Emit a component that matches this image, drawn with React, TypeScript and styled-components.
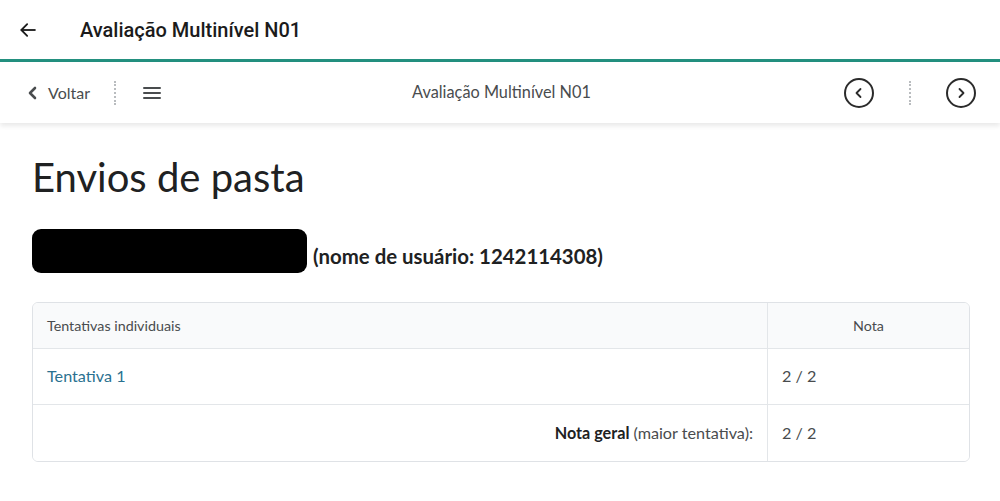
import React from 'react';
import styled, { createGlobalStyle } from 'styled-components';

const GlobalStyle = createGlobalStyle`
  html, body {
    margin: 0;
    padding: 0;
    background: #fff;
  }
  body {
    font-family: Lato, "Open Sans", sans-serif;
    color: #202122;
  }
`;

const AppBar = styled.header`
  display: flex;
  align-items: center;
  height: 59px;
  padding-left: 18px;
  border-bottom: 3px solid #23907f;
  background: #fff;
`;

const IconButton = styled.button`
  display: flex;
  align-items: center;
  justify-content: center;
  padding: 0;
  border: none;
  background: transparent;
  color: #1b1b1b;
  cursor: pointer;
`;

const AppTitle = styled.h1`
  margin: 0 0 0 42px;
  font-family: Roboto, sans-serif;
  font-size: 20px;
  font-weight: 500;
  color: #1b1b1b;
`;

const NavBar = styled.nav`
  position: relative;
  display: grid;
  grid-template-columns: 1fr auto 1fr;
  align-items: center;
  height: 61px;
  padding: 0 24px 0 27px;
  background: #fff;
  box-shadow: 0 3px 5px rgba(0, 0, 0, 0.09);
`;

const NavSide = styled.div<{ $end?: boolean }>`
  display: flex;
  align-items: center;
  justify-content: ${(p) => (p.$end ? 'flex-end' : 'flex-start')};
  gap: ${(p) => (p.$end ? '35px' : '0')};
`;

const BackLink = styled.a`
  display: flex;
  align-items: center;
  gap: 9px;
  color: #494c4e;
  font-size: 16px;
  text-decoration: none;
  margin-right: 24px;
`;

const DottedDivider = styled.span`
  display: block;
  width: 0;
  height: 24px;
  border-left: 2px dotted #b9bcbf;
`;

const Hamburger = styled(IconButton)`
  margin-left: 26px;
  color: #494c4e;
`;

const NavTitle = styled.div`
  font-size: 16.3px;
  color: #494c4e;
  margin-top: -2px;
`;

const CircleButton = styled(IconButton)`
  width: 30px;
  height: 30px;
  border: 2px solid #2b2b2b;
  border-radius: 50%;
  box-sizing: border-box;
`;

const Main = styled.main`
  padding: 30px 30px 0 32px;
`;

const Heading = styled.h2`
  margin: 0;
  font-size: 40px;
  font-weight: 400;
  line-height: 1.2;
  color: #202122;
`;

const UserLine = styled.div`
  display: flex;
  align-items: center;
  margin-top: 28px;
`;

const Redacted = styled.span`
  display: block;
  width: 275px;
  height: 44px;
  border-radius: 9px;
  background: #000;
`;

const UserName = styled.span`
  margin-left: 6px;
  margin-top: 10px;
  font-size: 20.4px;
  font-weight: 700;
  color: #202122;
`;

const Table = styled.div`
  display: grid;
  grid-template-columns: 735px 1fr;
  margin-top: 29px;
  border: 1px solid #dfe2e6;
  border-radius: 6px;
  overflow: hidden;
`;

const Cell = styled.div<{ $head?: boolean; $align?: 'left' | 'center' | 'right'; $last?: boolean; $right?: boolean }>`
  display: flex;
  align-items: center;
  justify-content: ${(p) => (p.$align === 'center' ? 'center' : p.$align === 'right' ? 'flex-end' : 'flex-start')};
  height: ${(p) => (p.$head ? '46px' : '56px')};
  padding: ${(p) => (p.$head ? '0 14px' : '0 14px 2px')};
  box-sizing: border-box;
  background: ${(p) => (p.$head ? '#f9fafb' : '#fff')};
  border-bottom: ${(p) => (p.$last ? 'none' : '1px solid #e3e6e9')};
  border-right: ${(p) => (p.$right ? 'none' : '1px solid #e3e6e9')};
  font-size: ${(p) => (p.$head ? '14.3px' : '16.2px')};
  color: #494c4e;
`;

const Link = styled.a`
  color: #2a7190;
  text-decoration: none;
`;

const Strong = styled.b`
  font-weight: 700;
  color: #202122;
  margin-right: 4px;
`;

const App = () => (
  <>
    <GlobalStyle />
    <AppBar>
      <IconButton aria-label="Voltar">
        <svg width="20" height="20" viewBox="0 0 24 24" fill="none" stroke="currentColor" strokeWidth="2.2" strokeLinecap="square">
          <path d="M20 12H5" />
          <path d="M11 5l-7 7 7 7" strokeLinecap="round" strokeLinejoin="miter" />
        </svg>
      </IconButton>
      <AppTitle>Avaliação Multinível N01</AppTitle>
    </AppBar>

    <NavBar>
      <NavSide>
        <BackLink href="#">
          <svg width="12" height="14" viewBox="0 0 12 14" fill="none" stroke="#494c4e" strokeWidth="2.6" strokeLinecap="round" strokeLinejoin="round">
            <path d="M8 2L3 7l5 5" />
          </svg>
          Voltar
        </BackLink>
        <DottedDivider />
        <Hamburger aria-label="Menu">
          <svg width="20" height="16" viewBox="0 0 20 16" fill="none" stroke="currentColor" strokeWidth="2" strokeLinecap="round">
            <path d="M2 3h16M2 8h16M2 13h16" />
          </svg>
        </Hamburger>
      </NavSide>
      <NavTitle>Avaliação Multinível N01</NavTitle>
      <NavSide $end>
        <CircleButton aria-label="Anterior">
          <svg width="14" height="14" viewBox="0 0 14 14" fill="none" stroke="#2b2b2b" strokeWidth="1.8" strokeLinecap="round" strokeLinejoin="round">
            <path d="M8.5 3L4.5 7l4 4" />
          </svg>
        </CircleButton>
        <DottedDivider />
        <CircleButton aria-label="Próximo">
          <svg width="14" height="14" viewBox="0 0 14 14" fill="none" stroke="#2b2b2b" strokeWidth="1.8" strokeLinecap="round" strokeLinejoin="round">
            <path d="M5.5 3l4 4-4 4" />
          </svg>
        </CircleButton>
      </NavSide>
    </NavBar>

    <Main>
      <Heading>Envios de pasta</Heading>
      <UserLine>
        <Redacted />
        <UserName>(nome de usuário: 1242114308)</UserName>
      </UserLine>

      <Table>
        <Cell $head>Tentativas individuais</Cell>
        <Cell $head $right $align="center">Nota</Cell>
        <Cell><Link href="#">Tentativa 1</Link></Cell>
        <Cell $right>2 / 2</Cell>
        <Cell $last $align="right">
          <Strong>Nota geral</Strong>(maior tentativa):
        </Cell>
        <Cell $last $right>2 / 2</Cell>
      </Table>
    </Main>
  </>
);

export default App;
